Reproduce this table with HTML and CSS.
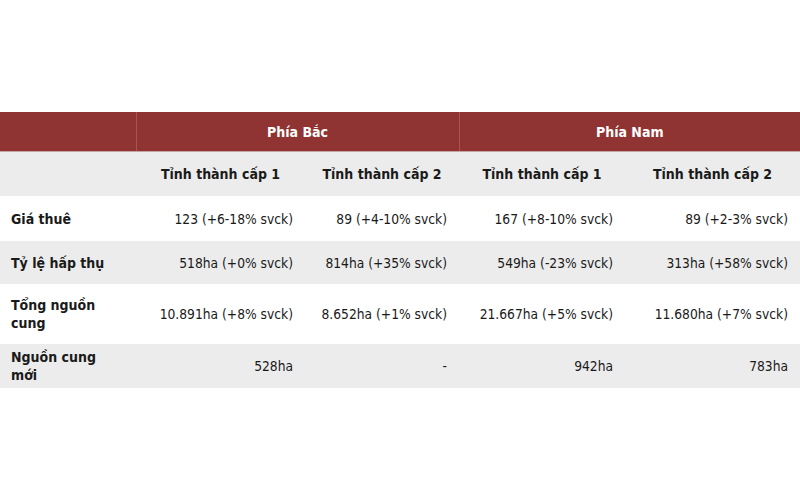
FILE: index.html
```html
<!DOCTYPE html>
<html lang="vi">
<head>
<meta charset="utf-8">
<link rel="stylesheet" href="styles.css">
</head>
<body>
<div class="page">
  <table class="data">
    <colgroup>
      <col class="c0"><col class="c1"><col class="c2"><col class="c3"><col class="c4">
    </colgroup>
    <thead>
      <tr class="region">
        <th class="blank"></th>
        <th colspan="2" class="sep">Phía Bắc</th>
        <th colspan="2" class="sep">Phía Nam</th>
      </tr>
      <tr class="tier">
        <th></th>
        <th>Tỉnh thành cấp 1</th>
        <th>Tỉnh thành cấp 2</th>
        <th>Tỉnh thành cấp 1</th>
        <th>Tỉnh thành cấp 2</th>
      </tr>
    </thead>
    <tbody>
      <tr class="r1">
        <th>Giá thuê</th>
        <td>123 (+6-18% svck)</td>
        <td>89 (+4-10% svck)</td>
        <td>167 (+8-10% svck)</td>
        <td>89 (+2-3% svck)</td>
      </tr>
      <tr class="r2 alt">
        <th>Tỷ lệ hấp thụ</th>
        <td>518ha (+0% svck)</td>
        <td>814ha (+35% svck)</td>
        <td>549ha (-23% svck)</td>
        <td>313ha (+58% svck)</td>
      </tr>
      <tr class="r3">
        <th>Tổng nguồn cung</th>
        <td>10.891ha (+8% svck)</td>
        <td>8.652ha (+1% svck)</td>
        <td>21.667ha (+5% svck)</td>
        <td>11.680ha (+7% svck)</td>
      </tr>
      <tr class="r4 alt">
        <th>Nguồn cung mới</th>
        <td>528ha</td>
        <td>-</td>
        <td>942ha</td>
        <td>783ha</td>
      </tr>
    </tbody>
  </table>
</div>
</body>
</html>
```
FILE: styles.css
```css
html, body {
  margin: 0;
  padding: 0;
  background: #ffffff;
}
.page {
  padding-top: 112px;
  width: 800px;
}
.data {
  width: 800px;
  border-collapse: collapse;
  table-layout: fixed;
  font-family: "DejaVu Sans Condensed", "DejaVu Sans", sans-serif;
  font-size: 13.7px;
  color: #1a1a1a;
}
.c0 { width: 136px; }
.c1 { width: 169px; }
.c2 { width: 154px; }
.c3 { width: 166px; }
.c4 { width: 175px; }

.region th {
  background: #8f3333;
  color: #ffffff;
  font-weight: bold;
  font-size: 14px;
  height: 39px;
  padding: 0;
  text-align: center;
  border-bottom: 1px solid #c9a3a3;
}
.region th.sep {
  border-left: 1px solid #a85454;
}
.tier th {
  background: #ececec;
  height: 44px;
  padding: 0;
  text-align: center;
  font-weight: bold;
  font-size: 14px;
}
tbody th {
  text-align: left;
  font-weight: bold;
  font-size: 14px;
  padding: 0 28px 0 11px;
  line-height: 18px;
}
tbody td {
  text-align: right;
  padding: 0 12px 0 0;
  white-space: nowrap;
}
.r1 { height: 45px; }
.r2 { height: 43px; }
.r3 { height: 60px; }
.r4 { height: 44px; }
.alt th, .alt td {
  background: #ececec;
}
```
